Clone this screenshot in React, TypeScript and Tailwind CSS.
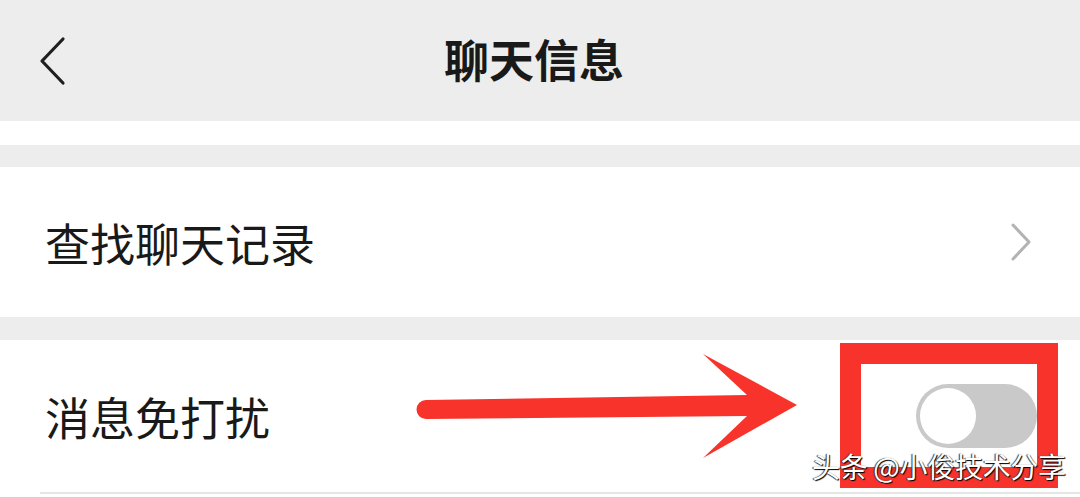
const cjk = "font-['Noto_Sans_CJK_SC','Noto_Sans',sans-serif]";

function BackIcon() {
  return (
    <svg width="30" height="50" viewBox="0 0 30 50" fill="none">
      <path d="M25 3 L4 25 L25 47" stroke="#1f1f1f" strokeWidth="3.2" strokeLinecap="round" strokeLinejoin="round" />
    </svg>
  );
}

function ChevronRight() {
  return (
    <svg width="22" height="38" viewBox="0 0 22 38" fill="none">
      <path d="M3 2 L19 19 L3 36" stroke="#b3b3b3" strokeWidth="3" strokeLinecap="round" strokeLinejoin="round" />
    </svg>
  );
}

function Toggle() {
  return (
    <div className="w-[121px] h-[64px] rounded-full bg-[#c9c9c9] flex items-center p-[4px]">
      <div className="w-[56px] h-[56px] rounded-full bg-white" />
    </div>
  );
}

export default function App() {
  return (
    <div className={`relative w-[1080px] h-[497px] overflow-hidden bg-[#ededed] text-[#191919] ${cjk}`}>
      {/* header */}
      <div className="h-[121px] flex items-center">
        <div className="w-[120px] pl-[38px] flex items-center">
          <BackIcon />
        </div>
        <div className="flex-1 text-center text-[45px] font-semibold leading-none pr-[12px] pb-[4px]">聊天信息</div>
        <div className="w-[120px]" />
      </div>

      <div className="h-[24px] bg-white" />
      <div className="h-[22px]" />

      <div className="h-[150px] bg-white flex items-center justify-between pl-[45px] pr-[48px]">
        <span className="text-[45px] leading-none">查找聊天记录</span>
        <ChevronRight />
      </div>

      <div className="h-[23px]" />

      <div className="bg-white">
        <div className="h-[152px] flex items-center justify-between pl-[45px] pr-[43px]">
          <span className="text-[45px] leading-none">消息免打扰</span>
          <Toggle />
        </div>
        <div className="ml-[40px] h-[2px] bg-[#e6e6e6]" />
        <div className="h-[10px]" />
      </div>

      {/* red annotation arrow */}
      <svg
        className="absolute left-[400px] top-[340px]"
        width="420"
        height="140"
        viewBox="400 340 420 140"
      >
        <path
          d="M426 400 L747 395 L703 354 L797 405 L703 458 L747 416 L426 419 A9.5 9.5 0 0 1 426 400 Z"
          fill="#f7332b"
        />
      </svg>

      {/* red box around the switch */}
      <div className="absolute left-[840px] top-[343px] w-[218px] h-[145px] border-[21px] border-[#f7332b]" />

      {/* watermark */}
      <div className="absolute left-[812px] top-[452px] text-[28px] leading-none text-white tracking-[-0.3px] [text-shadow:1px_1px_1px_#000,-1px_0_1px_#333]">
        头条 @小俊技术分享
      </div>
    </div>
  );
}
